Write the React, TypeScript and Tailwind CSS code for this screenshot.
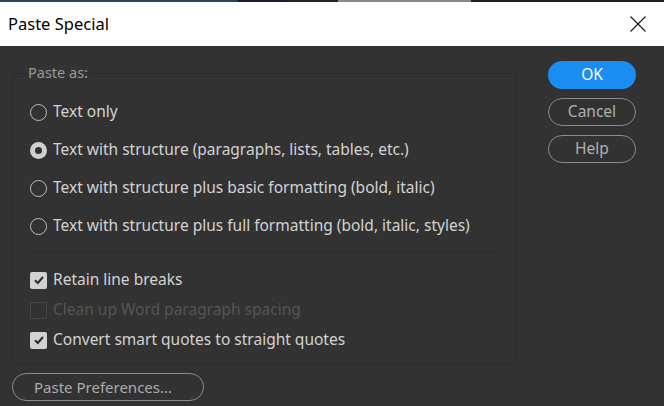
import React from 'react'

const font = { fontFamily: '"Noto Sans", "Open Sans", sans-serif' }

const Radio = ({ checked }: { checked?: boolean }) =>
  checked ? (
    <span className="w-[17px] h-[17px] rounded-full bg-[#cfcfcf] flex items-center justify-center shrink-0">
      <span className="w-[7px] h-[7px] rounded-full bg-[#323232]" />
    </span>
  ) : (
    <span className="w-[17px] h-[17px] rounded-full border border-[#bdbdbd] shrink-0" />
  )

const Check = ({ checked, disabled }: { checked?: boolean; disabled?: boolean }) =>
  checked ? (
    <span className="w-[17px] h-[17px] rounded-[2px] bg-[#d2d2d2] flex items-center justify-center shrink-0">
      <svg width="12" height="12" viewBox="0 0 12 12">
        <path d="M2 6.2 L4.8 9 L10 3" fill="none" stroke="#2b2b2b" strokeWidth="2" />
      </svg>
    </span>
  ) : (
    <span
      className={
        'w-[17px] h-[17px] rounded-[2px] border shrink-0 ' +
        (disabled ? 'border-[#474747]' : 'border-[#bdbdbd]')
      }
    />
  )

const radios = [
  { label: 'Text only' },
  { label: 'Text with structure (paragraphs, lists, tables, etc.)', checked: true },
  { label: 'Text with structure plus basic formatting (bold, italic)' },
  { label: 'Text with structure plus full formatting (bold, italic, styles)' },
]

const checks = [
  { label: 'Retain line breaks', checked: true },
  { label: 'Clean up Word paragraph spacing', disabled: true },
  { label: 'Convert smart quotes to straight quotes', checked: true },
]

export default function App() {
  return (
    <div className="w-[664px] h-[406px] flex flex-col overflow-hidden" style={font}>
      {/* strip of the window behind */}
      <div className="h-[2px] flex shrink-0">
        <div className="w-[238px] bg-[#2b4354]" />
        <div className="w-[47px] bg-[#1b1c30]" />
        <div className="w-[53px] bg-[#232323]" />
        <div className="w-[133px] bg-[#8a8a8a]" />
        <div className="flex-1 bg-[#1e1e1e]" />
      </div>

      <div className="h-[44px] bg-white flex items-center justify-between pl-[8px] pr-[18px] shrink-0">
        <span className="text-[16.5px] text-black">Paste Special</span>
        <svg width="16" height="16" viewBox="0 0 16 16">
          <path d="M0.5 0.5 L15.5 15.5 M15.5 0.5 L0.5 15.5" stroke="#111" strokeWidth="1.1" />
        </svg>
      </div>

      <div className="flex-1 bg-[#323232] flex">
        <div className="pl-[12px]">
          <div className="relative mt-[27px] w-[505px] h-[291px] border border-[#2a2a2a] rounded-[3px] pt-[19px] pl-[17px]">
            <span className="absolute left-[13px] -top-[12px] px-[2px] bg-[#323232] text-[14.5px] text-[#9a9a9a]">
              Paste as:
            </span>
            {radios.map((r) => (
              <div key={r.label} className="h-[38px] flex items-center gap-[6px]">
                <Radio checked={r.checked} />
                <span className="text-[15.5px] text-[#d2d2d2]">{r.label}</span>
              </div>
            ))}
            <div className="mt-[6px] mr-[16px] -ml-[2px] h-px bg-[#2a2a2a]" />
            <div className="mt-[13px]">
              {checks.map((c) => (
                <div key={c.label} className="h-[30px] flex items-center gap-[6px]">
                  <Check checked={c.checked} disabled={c.disabled} />
                  <span className={'text-[15.5px] ' + (c.disabled ? 'text-[#555555]' : 'text-[#d2d2d2]')}>
                    {c.label}
                  </span>
                </div>
              ))}
            </div>
          </div>
          <button className="mt-[9px] w-[192px] h-[28px] rounded-full border border-[#8c8c8c] text-[15px] text-[#acacac] text-left pl-[21px]">
            Paste Preferences...
          </button>
        </div>

        <div className="ml-[31px] mt-[15px] flex flex-col gap-[9px]">
          <button className="w-[88px] h-[28px] rounded-full bg-[#1b8cf2] text-white text-[15.5px]">OK</button>
          <button className="w-[88px] h-[28px] rounded-full border border-[#8c8c8c] text-[#b0b0b0] text-[15.5px]">
            Cancel
          </button>
          <button className="w-[88px] h-[28px] rounded-full border border-[#8c8c8c] text-[#b0b0b0] text-[15.5px]">
            Help
          </button>
        </div>
      </div>
    </div>
  )
}
